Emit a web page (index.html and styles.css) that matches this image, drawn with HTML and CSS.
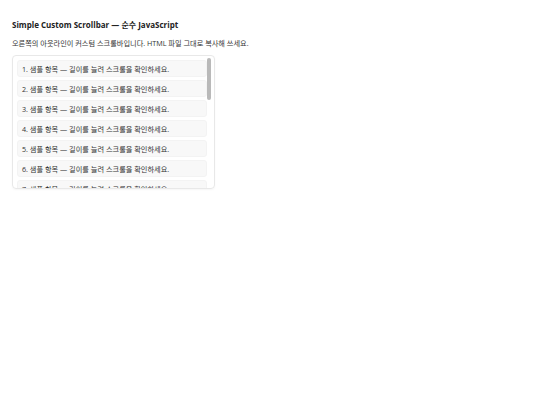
FILE: index.html
```html
<!DOCTYPE html>
<html lang="ko">

<head>
    <meta charset="UTF-8">
    <meta name="viewport" content="width=device-width, initial-scale=1.0">
    <title>Simple Custom Scrollbar</title>
    <link rel="stylesheet" href="styles.css">
</head>

<body>
    <h1 class="title">Simple Custom Scrollbar — 순수 JavaScript</h1>
    <p class="desc">오른쪽의 아웃라인이 커스텀 스크롤바입니다. HTML 파일 그대로 복사해 쓰세요.</p>

    <div class="scroll-box" id="scrollBox">
        <div class="scroll-content" id="scrollContent"></div>
        <div class="scroll-track">
            <div class="scroll-thumb" id="scrollThumb"></div>
        </div>
    </div>

    <script>
        const content = document.getElementById('scrollContent');
        const thumb = document.getElementById('scrollThumb');

        for (let i = 1; i <= 20; i++) {
            const item = document.createElement('div');
            item.className = 'item';
            item.textContent = i + '. 샘플 항목 — 길이를 늘려 스크롤을 확인하세요.';
            content.appendChild(item);
        }

        function updateThumb() {
            const ratio = content.clientHeight / content.scrollHeight;
            const trackHeight = content.clientHeight - 4;
            thumb.style.height = Math.max(ratio * trackHeight, 20) + 'px';
            const maxTop = trackHeight - thumb.offsetHeight;
            const scrolled = content.scrollTop / (content.scrollHeight - content.clientHeight);
            thumb.style.transform = 'translateY(' + (scrolled * maxTop) + 'px)';
        }

        content.addEventListener('scroll', updateThumb);
        window.addEventListener('resize', updateThumb);
        updateThumb();
    </script>
</body>

</html>
```

FILE: styles.css
```css
body {
    margin: 0;
    padding: 12px;
    font-family: "Open Sans", "Noto Sans CJK KR", sans-serif;
    color: #222;
    background: #fff;
}

.title {
    margin: 7px 0 0;
    font-size: 8px;
    font-weight: 700;
    line-height: 12px;
}

.desc {
    margin: 6px 0 0;
    font-size: 7.2px;
    line-height: 12px;
    color: #333;
}

.scroll-box {
    position: relative;
    width: 201px;
    height: 132px;
    margin-top: 6px;
    border: 1px solid #e8e8e8;
    border-radius: 4px;
    box-shadow: 0 1px 2px rgba(0, 0, 0, 0.04);
}

.scroll-content {
    height: 100%;
    overflow-y: scroll;
    scrollbar-width: none;
    padding: 4px 7px 4px 4px;
    box-sizing: border-box;
    display: flex;
    flex-direction: column;
    gap: 3px;
}

.scroll-content::-webkit-scrollbar {
    display: none;
}

.item {
    flex: none;
    height: 17px;
    line-height: 17px;
    padding: 0 4px;
    font-size: 7.2px;
    color: #333;
    background: #f8f8f8;
    border: 1px solid #f3f3f3;
    border-radius: 3px;
    box-sizing: border-box;
}

/* thumb drawn over the right edge of the list */
.scroll-track {
    position: absolute;
    top: 2px;
    right: 3px;
    bottom: 2px;
    width: 4px;
}

.scroll-thumb {
    width: 4px;
    border-radius: 2px;
    background: #b9b9b9;
}
```
